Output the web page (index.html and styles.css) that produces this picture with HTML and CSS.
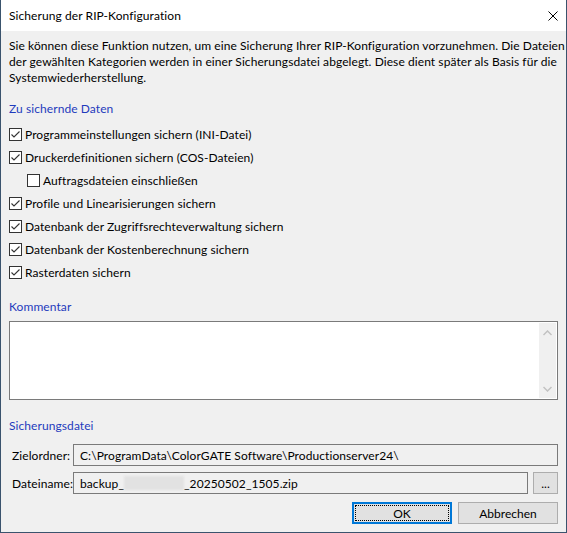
FILE: index.html
```html
<!DOCTYPE html>
<html lang="de">
<head>
<meta charset="utf-8">
<title>Sicherung der RIP-Konfiguration</title>
<link rel="stylesheet" href="styles.css">
</head>
<body>
<div class="window">
  <div class="titlebar">
    <span class="title">Sicherung der RIP-Konfiguration</span>
    <svg class="close" width="10" height="10" viewBox="0 0 10 10"><path d="M0.5 0.5 L9.5 9.5 M9.5 0.5 L0.5 9.5" stroke="#000" stroke-width="1" fill="none"/></svg>
  </div>
  <div class="content">
    <p class="intro">Sie können diese Funktion nutzen, um eine Sicherung Ihrer RIP-Konfiguration vorzunehmen. Die Dateien<br>der gewählten Kategorien werden in einer Sicherungsdatei abgelegt. Diese dient später als Basis für die<br>Systemwiederherstellung.</p>

    <h2 class="group">Zu sichernde Daten</h2>
    <ul class="checks">
      <li class="check"><span class="box checked"><svg width="11" height="11" viewBox="0 0 11 11"><path d="M1.5 5.5 L4 8 L9.5 2.5" stroke="#333" stroke-width="1.1" fill="none"/></svg></span>Programmeinstellungen sichern (INI-Datei)</li>
      <li class="check"><span class="box checked"><svg width="11" height="11" viewBox="0 0 11 11"><path d="M1.5 5.5 L4 8 L9.5 2.5" stroke="#333" stroke-width="1.1" fill="none"/></svg></span>Druckerdefinitionen sichern (COS-Dateien)</li>
      <li class="check sub"><span class="box"></span>Auftragsdateien einschließen</li>
      <li class="check"><span class="box checked"><svg width="11" height="11" viewBox="0 0 11 11"><path d="M1.5 5.5 L4 8 L9.5 2.5" stroke="#333" stroke-width="1.1" fill="none"/></svg></span>Profile und Linearisierungen sichern</li>
      <li class="check"><span class="box checked"><svg width="11" height="11" viewBox="0 0 11 11"><path d="M1.5 5.5 L4 8 L9.5 2.5" stroke="#333" stroke-width="1.1" fill="none"/></svg></span>Datenbank der Zugriffsrechteverwaltung sichern</li>
      <li class="check"><span class="box checked"><svg width="11" height="11" viewBox="0 0 11 11"><path d="M1.5 5.5 L4 8 L9.5 2.5" stroke="#333" stroke-width="1.1" fill="none"/></svg></span>Datenbank der Kostenberechnung sichern</li>
      <li class="check"><span class="box checked"><svg width="11" height="11" viewBox="0 0 11 11"><path d="M1.5 5.5 L4 8 L9.5 2.5" stroke="#333" stroke-width="1.1" fill="none"/></svg></span>Rasterdaten sichern</li>
    </ul>

    <h2 class="group group-gap">Kommentar</h2>
    <div class="textarea">
      <div class="scrollbar">
        <svg width="9" height="6" viewBox="0 0 9 6"><path d="M0.5 5 L4.5 1 L8.5 5" stroke="#c2c2c2" stroke-width="1.5" fill="none"/></svg>
        <svg width="9" height="6" viewBox="0 0 9 6"><path d="M0.5 1 L4.5 5 L8.5 1" stroke="#c2c2c2" stroke-width="1.5" fill="none"/></svg>
      </div>
    </div>

    <h2 class="group file-gap">Sicherungsdatei</h2>
    <div class="file-grid">
      <span class="label">Zielordner:</span>
      <div class="field">C:\ProgramData\ColorGATE Software\Productionserver24\</div>
      <span class="label">Dateiname:</span>
      <div class="field-row">
        <div class="field">backup_<span class="redact"></span>_20250502_1505.zip</div>
        <button class="btn-small">...</button>
      </div>
    </div>

    <div class="buttons">
      <button class="btn default"><span class="focus">OK</span></button>
      <button class="btn">Abbrechen</button>
    </div>
  </div>
</div>
</body>
</html>
```
FILE: styles.css
```css
body {
  margin: 0;
  font-family: "Segoe UI", Lato, "Liberation Sans", sans-serif;
  font-size: 12px;
  letter-spacing: 0.08px;
  color: #000;
}

.window {
  width: 567px;
  height: 533px;
  box-sizing: border-box;
  border: 1px solid #3a536d;
  border-top: 0;
  background: #f0f0f0;
  display: flex;
  flex-direction: column;
}

.titlebar {
  height: 31px;
  flex: none;
  background: #fff;
  display: flex;
  align-items: center;
  justify-content: space-between;
  padding: 0 8px;
}

.title {
  line-height: 16px;
}

.close {
  display: block;
}

.content {
  padding: 7px 8px 0;
}

.intro {
  margin: 0;
  line-height: 16px;
  white-space: nowrap;
}

.group {
  margin: 15px 0 0;
  font-size: 12px;
  font-weight: normal;
  line-height: 16px;
  color: #1f3bbd;
}

.checks {
  list-style: none;
  margin: 6px 0 0;
  padding: 0;
}

.check {
  height: 23px;
  display: flex;
  align-items: center;
}

.check.sub {
  padding-left: 18px;
}

.box {
  width: 13px;
  height: 13px;
  box-sizing: border-box;
  border: 1px solid #333;
  background: #fff;
  margin-right: 3px;
  display: flex;
  align-items: center;
  justify-content: center;
  flex: none;
}

.box svg {
  display: block;
}

.group-gap {
  margin-top: 15px;
}

.textarea {
  margin-top: 6px;
  height: 79px;
  box-sizing: border-box;
  border: 1px solid #7a7a7a;
  background: #fff;
  display: flex;
  justify-content: flex-end;
  padding: 1px;
}

.scrollbar {
  width: 17px;
  background: #f0f0f0;
  display: flex;
  flex-direction: column;
  justify-content: space-between;
  align-items: center;
  padding: 7px 0 6px;
  box-sizing: border-box;
}

.scrollbar svg {
  display: block;
}

.file-gap {
  margin-top: 18px;
}

.file-grid {
  margin-top: 10px;
  display: grid;
  grid-template-columns: 64px 1fr;
  row-gap: 6px;
}

.label {
  padding-left: 3px;
  align-self: center;
}

.field {
  height: 22px;
  box-sizing: border-box;
  border: 1px solid #7a7a7a;
  background: #f0f0f0;
  padding: 0 6px;
  display: flex;
  align-items: center;
  white-space: nowrap;
  flex: 1;
}

.field-row {
  display: flex;
  gap: 5px;
}

.redact {
  display: inline-block;
  width: 60px;
  height: 14px;
  background: #e2e2e2;
  filter: blur(1px);
}

.btn-small {
  width: 25px;
  height: 22px;
  box-sizing: border-box;
  border: 1px solid #adadad;
  background: #e1e1e1;
  font: inherit;
  padding: 0;
  color: #000;
}

.buttons {
  margin-top: 8px;
  display: flex;
  justify-content: flex-end;
  gap: 6px;
}

.btn {
  width: 100px;
  height: 22px;
  box-sizing: border-box;
  border: 1px solid #adadad;
  background: #e1e1e1;
  font: inherit;
  color: #000;
  padding: 0;
  display: flex;
  align-items: center;
  justify-content: center;
}

.btn.default {
  border: 2px solid #0078d7;
  padding: 1px;
}

.btn .focus {
  flex: 1;
  align-self: stretch;
  display: flex;
  align-items: center;
  justify-content: center;
  outline: 1px dotted #000;
  outline-offset: -1px;
}
```
